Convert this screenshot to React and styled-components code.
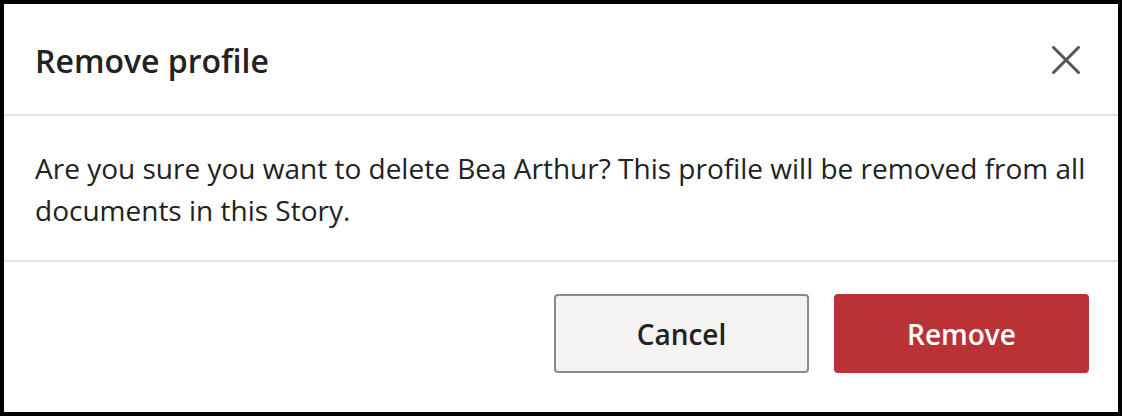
import React from "react";
import styled, { createGlobalStyle } from "styled-components";

const Global = createGlobalStyle`
  html, body { margin: 0; padding: 0; background: #000; }
  * { box-sizing: border-box; }
`;

const Dialog = styled.div`
  width: 1122px;
  height: 416px;
  border: 4px solid #000;
  background: #fff;
  display: flex;
  flex-direction: column;
  font-family: "Open Sans", "Noto Sans", sans-serif;
  color: #222;
`;

const Header = styled.header`
  height: 112px;
  flex: none;
  display: flex;
  align-items: center;
  justify-content: space-between;
  padding: 2px 38px 0 31px;
  border-bottom: 2px solid #e3e3e3;
`;

const Title = styled.h2`
  margin: 0;
  font-size: 32px;
  font-weight: 600;
  color: #222;
`;

const CloseButton = styled.button`
  border: 0;
  background: none;
  padding: 0;
  width: 28px;
  height: 28px;
  display: flex;
  cursor: pointer;
`;

const Body = styled.div`
  flex: none;
  padding: 31px 16px 29px 31px;
  border-bottom: 2px solid #e3e3e3;
  font-size: 28px;
  line-height: 42px;
  color: #222;
  p { margin: 0; }
`;

const Footer = styled.footer`
  flex: 1;
  display: flex;
  justify-content: flex-end;
  align-items: flex-start;
  gap: 25px;
  padding: 32px 29px 0 0;
`;

const Button = styled.button`
  width: 255px;
  height: 79px;
  border-radius: 4px;
  font-family: inherit;
  font-size: 28px;
  font-weight: 600;
  cursor: pointer;
  border: 2px solid ${(p) => (p.$primary ? "#b83236" : "#8a8a86")};
  background: ${(p) => (p.$primary ? "#b83236" : "#f4f3f1")};
  color: ${(p) => (p.$primary ? "#fff" : "#222")};
`;

export default function App() {
  return (
    <>
      <Global />
      <Dialog role="dialog">
        <Header>
          <Title>Remove profile</Title>
          <CloseButton aria-label="Close">
            <svg width="28" height="28" viewBox="0 0 28 28">
              <path d="M1.5 1.5 L26.5 26.5 M26.5 1.5 L1.5 26.5" stroke="#555" strokeWidth="3" strokeLinecap="square" />
            </svg>
          </CloseButton>
        </Header>
        <Body>
          <p>
            Are you sure you want to delete Bea Arthur? This profile will be removed from all documents in this Story.
          </p>
        </Body>
        <Footer>
          <Button>Cancel</Button>
          <Button $primary>Remove</Button>
        </Footer>
      </Dialog>
    </>
  );
}
